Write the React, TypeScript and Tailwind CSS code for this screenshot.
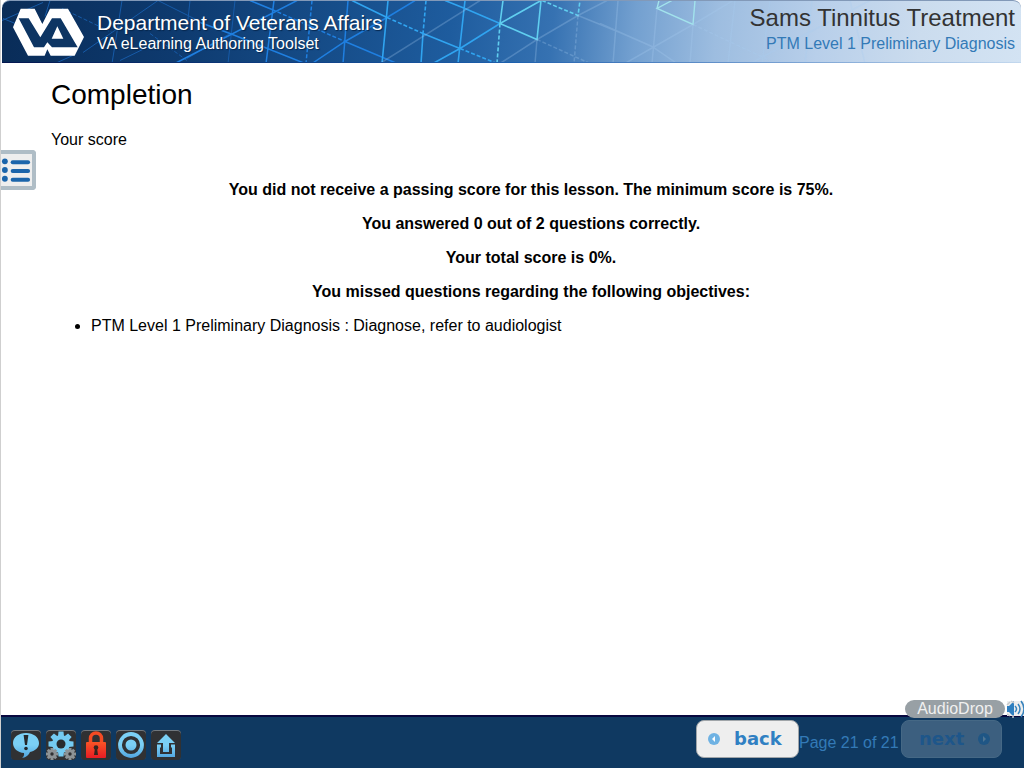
import React from 'react';

const results = [
  'You did not receive a passing score for this lesson. The minimum score is 75%.',
  'You answered 0 out of 2 questions correctly.',
  'Your total score is 0%.',
  'You missed questions regarding the following objectives:',
];

function HeaderPattern() {
  return (
    <svg
      className="absolute inset-0 h-full w-full"
      viewBox="2 0 1019 63"
      preserveAspectRatio="xMidYMid slice"
      fill="none"
      aria-hidden="true"
    >
      <g stroke="#175ba8" strokeWidth="1">
        <path d="M2 20 43 2M3 18 30 29M122 0 112 63M50 0 45 16M158 0 83 52M158 0 200 21M55 63 75 54M120 60 157 42M235 0 228 63" />
        <path d="M150 33 187 60M62 8 112 32" strokeDasharray="4 2" />
        <path d="M190 0 187 28M187 58 230 33" />
      </g>
      <g stroke="#1f7fe0" strokeWidth="1.5">
        <path d="M297 0 200 50 175 63M274 0 266 63M250 0 272 9M200 22 230 33 305 63M312 63 345 41 387 17 415 0M348 0 343 63M345 41 397 63" />
        <path d="M272 9 345 41M312 0 306 63" strokeDasharray="4 2" />
      </g>
      <g stroke="#30a4f0" strokeWidth="1.6">
        <path d="M388 0 382 63M352 0 387 17M423 33 421 63M423 33 460 48M433 63 460 48 500 23M445 0 465 8 500 23M465 0 458 63" />
        <path d="M387 17 423 33M426 0 423 33M460 48 497 63" strokeDasharray="4 2" />
      </g>
      <g stroke="#60ceef" strokeWidth="1.6">
        <path d="M503 0 500 23 537 39 541 0 500 23" />
        <path d="M500 23 497 63M542 0 578 15 580 0" strokeDasharray="4 2" />
      </g>
      <g stroke="#a2e3ec" strokeWidth="1.4">
        <path d="M672 0 657 8 693 24 695 0M659 0 657 8" />
      </g>
      <g stroke="#a9cdf0" strokeOpacity=".28" strokeWidth="1.5">
        <path d="M380 63 480 0M500 63 537 39 578 15 607 0M578 15 620 32 652 46 677 63M618 0 613 63M657 8 652 63M537 39 535 63M625 63 693 24 733 0M600 23 652 46M693 24 690 63M735 0 728 63M750 63 870 0M770 0 762 63M805 63 812 0M850 0 865 63" />
        <path d="M537 39 590 63M578 15 574 63M693 24 770 60" strokeDasharray="4 2" />
      </g>
    </svg>
  );
}

function VaLogo() {
  return (
    <svg className="h-14 w-20 shrink-0" viewBox="0 0 240 168" aria-label="VA logo" role="img">
      <path
        fill="#fff"
        d="M38 14H80L103 60 126 14H180L228 99 200 155H128L118 136 110 155H60L15 70Z"
      />
      <path
        fill="#0d3563"
        fillRule="evenodd"
        d="M32 43H62L97 100 132 43H158L209 130H132L118 115 108 130H78ZM148 67 131 104H166Z"
      />
    </svg>
  );
}

function MenuIcon() {
  return (
    <svg className="h-7 w-8" viewBox="0 0 32 28" fill="#1b65ab" aria-hidden="true">
      <circle cx="4" cy="5" r="3" />
      <circle cx="4" cy="14" r="3" />
      <circle cx="4" cy="23" r="3" />
      <rect x="10" y="4" width="20" height="4" rx="2" />
      <rect x="10" y="13" width="20" height="4" rx="2" />
      <rect x="10" y="22" width="20" height="4" rx="2" />
    </svg>
  );
}

const teeth = [0, 45, 90, 135, 180, 225, 270, 315];

function SmallGear({ x }: { x: number }) {
  return (
    <g transform={`translate(${x} 24)`} fill="#8d9396">
      {teeth.map((a) => (
        <rect key={a} x="-1.5" y="-6" width="3" height="4" transform={`rotate(${a})`} />
      ))}
      <circle r="4.2" />
      <circle r="1.7" fill="#303133" />
    </g>
  );
}

const tools = [
  {
    label: 'Comment',
    icon: (
      <>
        <path
          fill="url(#blueFill)"
          d="M15 3C7.500 3 2 7.300 2 13c0 5.600 4.700 9.500 11 10 .4 2-.3 3.600-2 5 4.500-.7 7-3 8-6 5.500-1.200 9-4.500 9-9 0-5.700-5.500-10-13-10Z"
        />
        <path fill="#25282b" d="M12.600 5h4.800l-1.400 10h-2Z" />
        <circle cx="15" cy="18.500" r="1.800" fill="#25282b" />
      </>
    ),
  },
  {
    label: 'Settings',
    icon: (
      <>
        <g transform="translate(15 14)">
          {teeth.map((a) => (
            <path key={a} d="M-3-7.500-2.500-12.500h5L3-7.500Z" fill="#74cbf2" transform={`rotate(${a})`} />
          ))}
          <circle r="9" fill="#74cbf2" />
          <circle r="4.500" fill="#282b2e" />
        </g>
        <SmallGear x={6} />
        <SmallGear x={24} />
      </>
    ),
  },
  {
    label: 'Lock',
    icon: (
      <>
        <path d="M9.500 13V8.500a5.500 5.500 0 0 1 11 0V13" fill="none" stroke="#f44b24" strokeWidth="3.500" />
        <rect x="5" y="12" width="20" height="16" rx="1" fill="url(#redFill)" />
        <circle cx="15" cy="17.500" r="2.300" fill="#35251f" />
        <path d="M14 18h2l1 7h-4Z" fill="#35251f" />
      </>
    ),
  },
  {
    label: 'Target',
    icon: (
      <>
        <circle cx="15" cy="15" r="11" fill="none" stroke="url(#blueFill)" strokeWidth="3.800" />
        <circle cx="15" cy="15" r="5.500" fill="url(#blueFill)" />
      </>
    ),
  },
  {
    label: 'Exit',
    icon: (
      <>
        <path fill="url(#blueFill)" d="M15 4 24 13H18V22H12V13H6Z" />
        <path d="M10 16H7.500V25.500H22.500V16H20" fill="none" stroke="url(#blueFill)" strokeWidth="3" />
      </>
    ),
  },
];

function IconFills() {
  return (
    <svg className="absolute h-0 w-0" aria-hidden="true">
      <defs>
        <linearGradient id="blueFill" x1="0" y1="0" x2="0" y2="30" gradientUnits="userSpaceOnUse">
          <stop offset=".5" stopColor="#7bd0f5" />
          <stop offset="1" stopColor="#4a9edb" />
        </linearGradient>
        <linearGradient id="redFill" x1="0" y1="0" x2="0" y2="1">
          <stop offset="0" stopColor="#fa5426" />
          <stop offset="1" stopColor="#e81c24" />
        </linearGradient>
      </defs>
    </svg>
  );
}

export default function App() {
  return (
    <div className="relative flex min-h-screen flex-col border-l border-[#cfcfcf] bg-white font-['Liberation_Sans',Arial,sans-serif] text-base text-black">
      <header className="relative mr-[3px] ml-px flex h-[63px] items-start justify-between overflow-hidden rounded-t-lg border-t border-t-[#8299b8] bg-[linear-gradient(95deg,#092c58_0%,#0e3b70_18%,#174f8c_34%,#1e5c9e_44%,#3672b2_54%,#73a0d0_62%,#9dbde0_70%,#b8cfea_80%,#cbdcee_90%,#d3e3f3_100%)]">
        <HeaderPattern />
        <div className="absolute inset-x-0 bottom-0 h-px bg-linear-to-r from-[#04164f] via-[#1c60ae] to-[#c3d8ee]" />
        <div className="relative flex pt-[3px] pl-1.5">
          <VaLogo />
          <div className="pt-[7px] pl-[9px] text-white">
            <div className="text-[21px] leading-6 [text-shadow:1px_1px_1px_#06264c]">Department of Veterans Affairs</div>
            <div className="text-base leading-[18px] [text-shadow:1px_1px_1px_#06264c]">VA eLearning Authoring Toolset</div>
          </div>
        </div>
        <div className="relative pt-[3px] pr-1.5 text-right">
          <h1 className="text-2xl leading-7 text-[#333]">Sams Tinnitus Treatment</h1>
          <h2 className="text-base leading-6 text-[#337ab7]">PTM Level 1 Preliminary Diagnosis</h2>
        </div>
      </header>

      <button
        type="button"
        aria-label="Open menu"
        className="absolute top-[150px] left-0 flex h-10 w-[35px] items-center rounded-r border-4 border-l-0 border-[#afbdc6] bg-[#eee]"
      >
        <MenuIcon />
      </button>

      <main className="flex-1 pt-3 pr-[13px] pl-[50px]">
        <h2 className="text-[28px] leading-10">Completion</h2>
        <p className="mt-4 leading-[18px]">Your score</p>
        <div className="mt-8 flex flex-col gap-4 text-center leading-[18px] font-bold">
          {results.map((line) => (
            <p key={line}>{line}</p>
          ))}
        </div>
        <ul className="mt-4 list-disc pl-10 leading-[18px]">
          <li>PTM Level 1 Preliminary Diagnosis : Diagnose, refer to audiologist</li>
        </ul>
      </main>

      <footer className="relative flex h-[53px] items-start justify-between border-t-2 border-[#08083f] bg-[#0f3961] pr-[22px] pl-2.5">
        <IconFills />
        <div className="flex gap-[5px] pt-[13px]">
          {tools.map((tool) => (
            <button
              key={tool.label}
              type="button"
              aria-label={tool.label}
              className="h-[30px] w-[30px] rounded bg-[#303133] inset-shadow-[0_1px_0_#70777d]"
            >
              <svg className="h-full w-full" viewBox="0 0 30 30" aria-hidden="true">
                {tool.icon}
              </svg>
            </button>
          ))}
        </div>
        <nav className="flex items-start pt-[3px] text-[#337ab7]" aria-label="Pages">
          <button
            type="button"
            className="flex h-[38px] w-[103px] items-center gap-3.5 rounded-lg border border-[#a0a5a9] bg-[#eee] pl-[11px] font-['DejaVu_Sans',sans-serif] text-lg font-bold text-[#3080c3]"
          >
            <svg className="h-3 w-3" viewBox="0 0 12 12" aria-hidden="true">
              <circle cx="6" cy="6" r="6" fill="#6fb2e3" />
              <path d="M7 3v6L4 6Z" fill="#fff" />
            </svg>
            back
          </button>
          <span className="w-[102px] pt-[13px] leading-5">Page 21 of 21</span>
          <button
            type="button"
            disabled
            className="flex h-[38px] w-[101px] items-center gap-3.5 rounded-lg border border-[#456885] bg-[#3c5f7f] pl-[17px] font-['DejaVu_Sans',sans-serif] text-lg font-bold text-[#1e568a]"
          >
            next
            <svg className="h-3 w-3" viewBox="0 0 12 12" aria-hidden="true">
              <circle cx="6" cy="6" r="6" fill="#1f5685" />
              <path d="M5 3v6l3-3Z" fill="#4f7593" />
            </svg>
          </button>
        </nav>
        <div className="absolute -top-[17px] right-0 flex items-center">
          <span className="h-[18px] w-[100px] rounded-full bg-[#98a0a5] text-center leading-[18px] text-[#f0f0f0]">
            AudioDrop
          </span>
          <svg className="h-[18px] w-[19px]" viewBox="0 0 19 18" aria-label="Sound" role="img">
            <path d="M2 1h17v15H2Z" fill="#eee" />
            <path d="M2 6h2l5-5v16l-5-5H2Z" fill="#2f7fc0" />
            <path d="M2 5 5 2M6 1l3 2M2 14l3 2M8 15v3" stroke="#c5c8ca" strokeWidth="1.5" />
            <path d="M10 6q3 3 0 6M13 4q4 5 0 10M16 1q6 8 0 16" fill="none" stroke="#3783bd" strokeWidth="1.5" />
          </svg>
        </div>
      </footer>
    </div>
  );
}
